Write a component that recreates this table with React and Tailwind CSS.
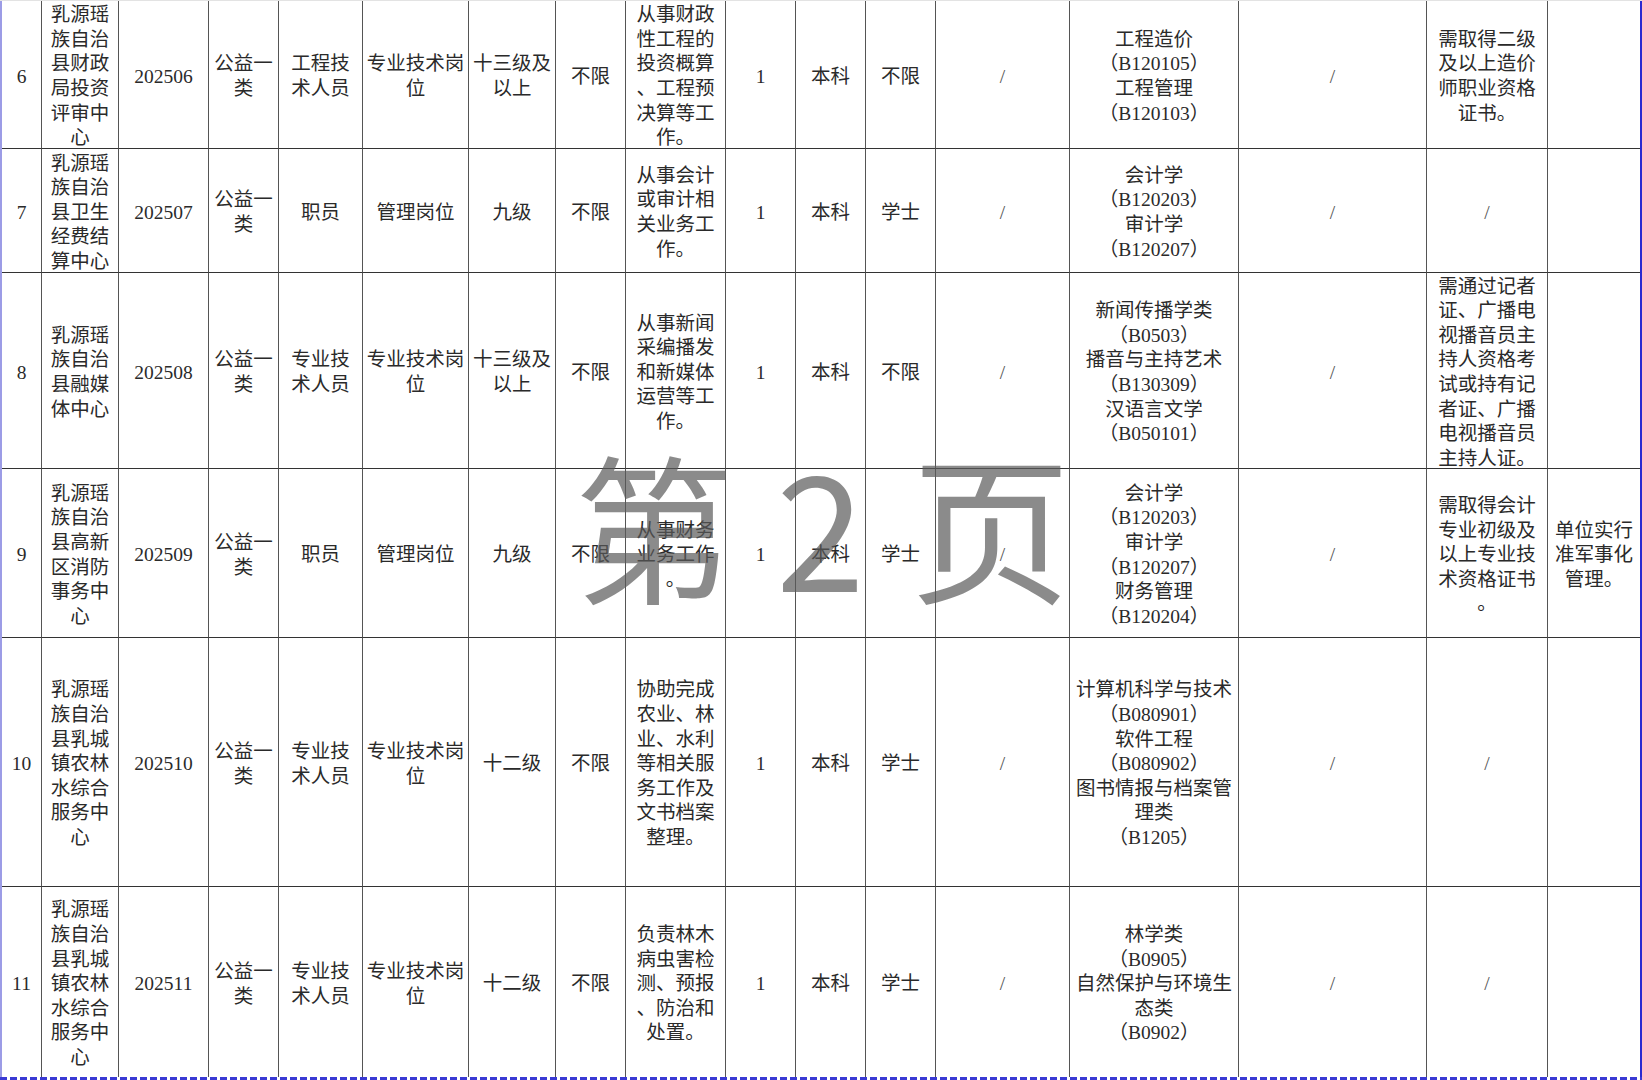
import clsx from 'clsx'

// one row per record, each cell is a list of display lines
const ROWS = [
  [
    ['6'],
    ['乳源瑶', '族自治', '县财政', '局投资', '评审中', '心'],
    ['202506'],
    ['公益一', '类'],
    ['工程技', '术人员'],
    ['专业技术岗', '位'],
    ['十三级及', '以上'],
    ['不限'],
    ['从事财政', '性工程的', '投资概算', '、工程预', '决算等工', '作。'],
    ['1'],
    ['本科'],
    ['不限'],
    ['/'],
    ['工程造价', '（B120105）', '工程管理', '（B120103）'],
    ['/'],
    ['需取得二级', '及以上造价', '师职业资格', '证书。'],
    [],
  ],
  [
    ['7'],
    ['乳源瑶', '族自治', '县卫生', '经费结', '算中心'],
    ['202507'],
    ['公益一', '类'],
    ['职员'],
    ['管理岗位'],
    ['九级'],
    ['不限'],
    ['从事会计', '或审计相', '关业务工', '作。'],
    ['1'],
    ['本科'],
    ['学士'],
    ['/'],
    ['会计学', '（B120203）', '审计学', '（B120207）'],
    ['/'],
    ['/'],
    [],
  ],
  [
    ['8'],
    ['乳源瑶', '族自治', '县融媒', '体中心'],
    ['202508'],
    ['公益一', '类'],
    ['专业技', '术人员'],
    ['专业技术岗', '位'],
    ['十三级及', '以上'],
    ['不限'],
    ['从事新闻', '采编播发', '和新媒体', '运营等工', '作。'],
    ['1'],
    ['本科'],
    ['不限'],
    ['/'],
    ['新闻传播学类', '（B0503）', '播音与主持艺术', '（B130309）', '汉语言文学', '（B050101）'],
    ['/'],
    ['需通过记者', '证、广播电', '视播音员主', '持人资格考', '试或持有记', '者证、广播', '电视播音员', '主持人证。'],
    [],
  ],
  [
    ['9'],
    ['乳源瑶', '族自治', '县高新', '区消防', '事务中', '心'],
    ['202509'],
    ['公益一', '类'],
    ['职员'],
    ['管理岗位'],
    ['九级'],
    ['不限'],
    ['从事财务', '业务工作', '。'],
    ['1'],
    ['本科'],
    ['学士'],
    ['/'],
    ['会计学', '（B120203）', '审计学', '（B120207）', '财务管理', '（B120204）'],
    ['/'],
    ['需取得会计', '专业初级及', '以上专业技', '术资格证书', '。'],
    ['单位实行', '准军事化', '管理。'],
  ],
  [
    ['10'],
    ['乳源瑶', '族自治', '县乳城', '镇农林', '水综合', '服务中', '心'],
    ['202510'],
    ['公益一', '类'],
    ['专业技', '术人员'],
    ['专业技术岗', '位'],
    ['十二级'],
    ['不限'],
    ['协助完成', '农业、林', '业、水利', '等相关服', '务工作及', '文书档案', '整理。'],
    ['1'],
    ['本科'],
    ['学士'],
    ['/'],
    ['计算机科学与技术', '（B080901）', '软件工程', '（B080902）', '图书情报与档案管', '理类', '（B1205）'],
    ['/'],
    ['/'],
    [],
  ],
  [
    ['11'],
    ['乳源瑶', '族自治', '县乳城', '镇农林', '水综合', '服务中', '心'],
    ['202511'],
    ['公益一', '类'],
    ['专业技', '术人员'],
    ['专业技术岗', '位'],
    ['十二级'],
    ['不限'],
    ['负责林木', '病虫害检', '测、预报', '、防治和', '处置。'],
    ['1'],
    ['本科'],
    ['学士'],
    ['/'],
    ['林学类', '（B0905）', '自然保护与环境生', '态类', '（B0902）'],
    ['/'],
    ['/'],
    [],
  ],
]

const LAST_COL = 16
const LAST_ROW = ROWS.length - 1

function Cell({ lines, col, row }) {
  return (
    <div
      className={clsx(
        'flex flex-col items-center justify-center pt-[5px] text-center overflow-hidden whitespace-nowrap',
        col < LAST_COL && 'border-r border-r-[#555555]',
        row < LAST_ROW && 'border-b border-b-[#333333]'
      )}
    >
      {lines.map((line, i) => (
        <span key={i} className={clsx('block', line === '/' && 'text-[#555555]')}>
          {line}
        </span>
      ))}
    </div>
  )
}

export default function App() {
  return (
    <div className="relative w-[1642px] h-[1080px] overflow-hidden bg-white font-['Liberation_Serif','Noto_Sans_CJK_SC',serif] text-[19.5px] leading-[24.6px] text-[#2a2a2a]">
      <div className="flex h-[1077px] border-t border-t-[#e3e3e3]">
        <div className="w-[2px] bg-[#9c9ce6]" />
        <div className="grid flex-1 grid-cols-[40px_77px_90px_70px_84px_106px_87px_70px_100px_70px_70px_70px_134px_169px_188px_121px_92px] grid-rows-[148px_124px_196px_169px_249px_190px]">
          {ROWS.map((cells, r) =>
            cells.map((lines, c) => <Cell key={`${r}-${c}`} lines={lines} col={c} row={r} />)
          )}
        </div>
        <div className="w-[2px] bg-[#2a2ad0]" />
      </div>
      <div className="h-[3px] bg-[repeating-linear-gradient(90deg,#3a3ad4_0_7px,transparent_7px_10px)]" />

      {/* page watermark */}
      <div className="pointer-events-none absolute left-[574px] top-[422px] flex items-baseline font-['Noto_Sans_CJK_SC',sans-serif] text-[160px] leading-[200px] text-[rgba(90,90,90,0.7)]">
        <span>第</span>
        <span className="ml-[42px]">2</span>
        <span className="ml-[46px]">页</span>
      </div>
    </div>
  )
}
